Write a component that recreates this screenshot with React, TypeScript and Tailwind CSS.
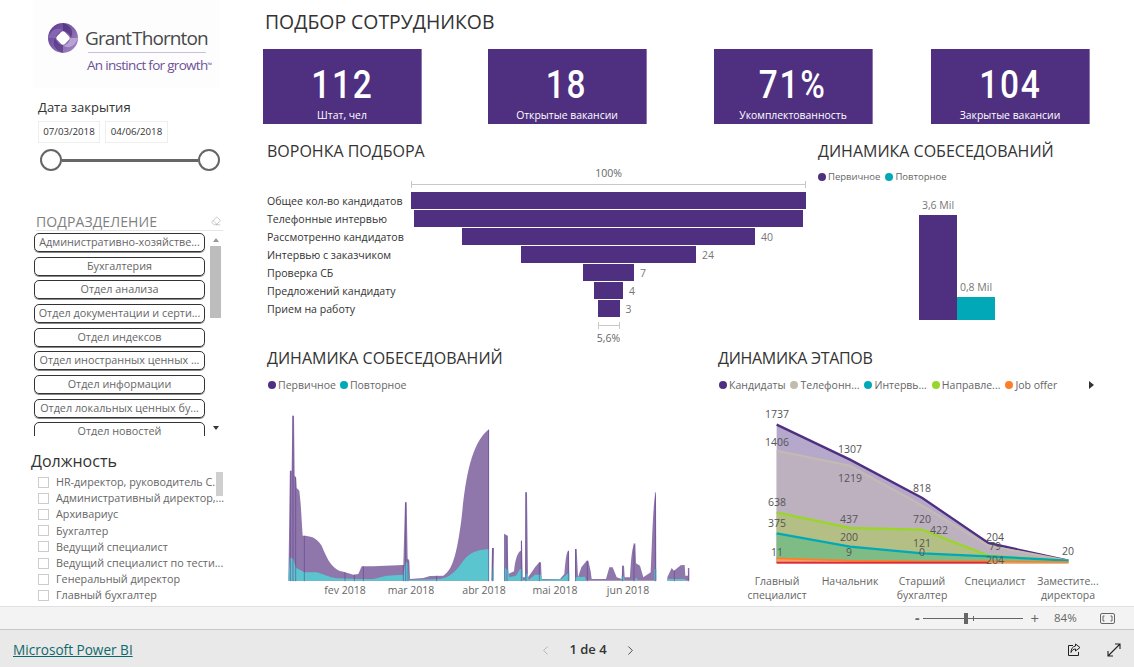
import { ChevronLeft, ChevronRight, Eraser } from "lucide-react";

const PURPLE = "#4f2f7f";
const TEAL = "#01a9b8";

const departments = [
  "Административно-хозяйстве...",
  "Бухгалтерия",
  "Отдел анализа",
  "Отдел документации и серти...",
  "Отдел индексов",
  "Отдел иностранных ценных ...",
  "Отдел информации",
  "Отдел локальных ценных бу...",
  "Отдел новостей",
];

const positions = [
  "HR-директор, руководитель С...",
  "Административный директор,...",
  "Архивариус",
  "Бухгалтер",
  "Ведущий специалист",
  "Ведущий специалист по тести...",
  "Генеральный директор",
  "Главный бухгалтер",
];

const funnel = [
  { label: "Общее кол-во кандидатов", w: 395, value: "" },
  { label: "Телефонные интервью", w: 389, value: "" },
  { label: "Рассмотренно кандидатов", w: 293, value: "40" },
  { label: "Интервью с заказчиком", w: 175, value: "24" },
  { label: "Проверка СБ", w: 51, value: "7" },
  { label: "Предложений кандидату", w: 29, value: "4" },
  { label: "Прием на работу", w: 22, value: "3" },
];

function Logo() {
  return (
    <div className="relative h-[88px] w-[187px] ml-[33px] bg-[#fdfdfd]">
      <svg className="absolute left-[14px] top-[22px]" width="32" height="32" viewBox="0 0 32 32">
        <defs>
          <linearGradient id="gt" x1="0" y1="0" x2="1" y2="1">
            <stop offset="0" stopColor="#5a3590" />
            <stop offset="1" stopColor="#a78cc8" />
          </linearGradient>
        </defs>
        <circle cx="16" cy="16" r="15" fill="url(#gt)" />
        <path d="M16 1 C24 4 27 9 24 16 C22 11 19 9 16 9 Z" fill="#3f2470" opacity="0.55" />
        <path d="M31 16 C28 24 23 27 16 24 C21 22 23 19 23 16 Z" fill="#c9b6df" opacity="0.7" />
        <path d="M16 31 C8 28 5 23 8 16 C10 21 13 23 16 23 Z" fill="#3f2470" opacity="0.5" />
        <path d="M1 16 C4 8 9 5 16 8 C11 10 9 13 9 16 Z" fill="#8a6db3" opacity="0.8" />
        <rect x="10.5" y="10.5" width="11" height="11" rx="3" fill="#fff" transform="rotate(45 16 16)" />
      </svg>
      <div className="absolute left-[52px] top-[26px] text-[19px] leading-[24px] tracking-[-0.9px] [word-spacing:-3px] text-[#48484a] whitespace-nowrap">
        Grant Thornton
      </div>
      <div className="absolute left-[55px] top-[52px] h-px w-[118px] bg-[#cbbfe0]" />
      <div className="absolute left-[54px] top-[56px] text-[13.5px] leading-[18px] tracking-[-0.7px] text-[#6d5199] whitespace-nowrap">
        An instinct for growth
        <sup className="text-[6px]">™</sup>
      </div>
    </div>
  );
}

function Sidebar() {
  return (
    <div className="w-[263px] shrink-0 flex flex-col">
      <Logo />
      <div className="ml-[38px] mt-[11px] text-[13px] leading-[17px] text-[#333]">Дата закрытия</div>
      <div className="ml-[38px] mt-[5px] flex gap-[5px]">
        <div className="w-[62px] h-[22px] border border-[#eeeeee] text-[9.7px] leading-[20px] text-center text-[#333]">07/03/2018</div>
        <div className="w-[63px] h-[22px] border border-[#eeeeee] text-[9.7px] leading-[20px] text-center text-[#333]">04/06/2018</div>
      </div>
      <div className="ml-[40px] mt-[6px] w-[180px] flex items-center">
        <div className="w-[22px] h-[22px] rounded-full border-2 border-[#666] bg-white shrink-0" />
        <div className="flex-1 h-[3px] bg-[#666]" />
        <div className="w-[22px] h-[22px] rounded-full border-2 border-[#666] bg-white shrink-0" />
      </div>

      <div className="ml-[36px] mt-[41px] w-[187px] flex items-center justify-between border-b border-[#e6e6e6] h-[19px]">
        <span className="text-[14px] leading-[17px] text-[#808080] tracking-[0.1px]">ПОДРАЗДЕЛЕНИЕ</span>
        <Eraser className="w-[10px] h-[10px] text-[#aaa] mr-[2px]" strokeWidth={1.5} />
      </div>
      <div className="ml-[34px] mt-[2px] w-[189px] h-[203px] flex gap-[5px] overflow-hidden">
        <div className="w-[171px] shrink-0">
          {departments.map((d) => (
            <div
              key={d}
              className="h-[19px] mb-[4.67px] rounded-[5px] border border-[#333] shadow-[0_1px_0_#888] text-[10.8px] leading-[16px] text-center text-[#666] whitespace-nowrap overflow-hidden"
            >
              {d}
            </div>
          ))}
        </div>
        <div className="w-[11px] flex flex-col items-center">
          <div className="h-[13px] flex items-center"><div className="border-x-[3px] border-x-transparent border-b-[4px] border-b-[#999]" /></div>
          <div className="w-[11px] h-[72px] bg-[#bdbdbd]" />
          <div className="flex-1" />
          <div className="h-[16px] flex items-center"><div className="border-x-[3px] border-x-transparent border-t-[4px] border-t-[#333]" /></div>
        </div>
      </div>

      <div className="ml-[31px] mt-[15px] text-[16px] leading-[20px] text-[#333]">Должность</div>
      <div className="ml-[38px] mt-[2px] w-[185px] flex">
        <div className="w-[178px] pt-[1px]">
          {positions.map((p) => (
            <div key={p} className="h-[16.2px] flex items-center gap-[7px]">
              <div className="w-[11px] h-[11px] border border-[#cccccc] shrink-0" />
              <span className="text-[10.8px] leading-[16px] text-[#666] whitespace-nowrap">{p}</span>
            </div>
          ))}
        </div>
        <div className="w-[7px] h-[24px] -mt-[1px] bg-[#cfcfcf]" />
      </div>
    </div>
  );
}

function Kpi({ value, label, className }: { value: string; label: string; className: string }) {
  return (
    <div className={`w-[159px] h-[75px] bg-[#4f2f7f] border-r border-[#8f77ab] flex flex-col items-center text-white ${className}`}>
      <div className="mt-[13px] text-[38px] leading-[46px] tracking-[2px] scale-x-[0.88] font-medium font-['Roboto',sans-serif]">{value}</div>
      <div className="mt-[0px] text-[10.4px] leading-[14px] whitespace-nowrap">{label}</div>
    </div>
  );
}

function LegendDot({ color, label, small }: { color: string; label: string; small?: boolean }) {
  return (
    <span className="flex items-center gap-[2px]">
      <span className="w-[8px] h-[8px] rounded-full" style={{ background: color }} />
      <span className={`${small ? "text-[9.5px]" : "text-[10.5px]"} leading-[14px] text-[#666] whitespace-nowrap`}>{label}</span>
    </span>
  );
}

function Funnel() {
  return (
    <div className="w-[555px] shrink-0 pl-[4px]">
      <div className="text-[16px] leading-[20px] text-[#333] mt-[17px]">ВОРОНКА ПОДБОРА</div>
      <div className="ml-[144px] w-[395px] mt-[5px] text-center text-[10.5px] leading-[14px] text-[#666]">100%</div>
      <div className="ml-[144px] w-[395px] h-[7px] mt-[1px] border-x border-[#c8c8c8] flex items-center">
        <div className="h-px w-full bg-[#c8c8c8]" />
      </div>
      <div className="mt-[3px]">
        {funnel.map((f) => (
          <div key={f.label} className="h-[18px] flex items-center">
            <div className="w-[144px] shrink-0 pt-[2px] text-[10.6px] leading-[14px] text-[#333] whitespace-nowrap">{f.label}</div>
            <div className="w-[395px] h-[17px] flex justify-center relative">
              <div className="h-[17px] relative" style={{ width: f.w, background: PURPLE }}>
                {f.value && (
                  <span className="absolute left-full ml-[6px] top-[2px] text-[10.5px] leading-[14px] text-[#777]">{f.value}</span>
                )}
              </div>
            </div>
          </div>
        ))}
      </div>
      <div className="ml-[144px] w-[395px] flex flex-col items-center">
        <div className="w-[22px] h-[7px] mt-[5px] border-x border-[#c8c8c8] flex items-center">
          <div className="h-px w-full bg-[#c8c8c8]" />
        </div>
        <div className="text-[10.5px] leading-[14px] text-[#666] mt-[2px]">5,6%</div>
      </div>
    </div>
  );
}

function ColumnChart() {
  return (
    <div className="flex-1">
      <div className="text-[16px] leading-[20px] text-[#333] mt-[17px] whitespace-nowrap">ДИНАМИКА СОБЕСЕДОВАНИЙ</div>
      <div className="flex gap-[5px] mt-[9px]">
        <LegendDot small color={PURPLE} label="Первичное" />
        <LegendDot small color={TEAL} label="Повторное" />
      </div>
      <div className="ml-[101px] h-[136px] flex items-end">
        <div className="flex flex-col items-center w-[38px]">
          <span className="text-[10.5px] leading-[14px] text-[#777] mb-[3px] whitespace-nowrap">3,6 Mil</span>
          <div className="w-[38px] h-[105px]" style={{ background: PURPLE }} />
        </div>
        <div className="flex flex-col items-center w-[38px]">
          <span className="text-[10.5px] leading-[14px] text-[#777] mb-[3px] whitespace-nowrap">0,8 Mil</span>
          <div className="w-[38px] h-[23px]" style={{ background: TEAL }} />
        </div>
      </div>
    </div>
  );
}

function AreaChart() {
  const purple = [
    "M85 710 L90 380 L95 380 L97 215 L102 215 L104 395 L108 400 L110 432 L118 440 L122 480 L128 575 C150 575 170 580 185 605 C200 640 215 678 250 683 L280 692 L295 690 L305 667 L340 667 L430 663 L435 475 L440 475 L443 645 L448 650 L450 705 L490 702 L510 696 L550 695 C575 680 590 640 605 520 C615 420 630 300 685 257 L687 257 L687 710 Z",
    "M694 710 L696 612 L702 612 L700 710 Z",
    "M733 710 L733 570 L743 575 L745 690 L762 682 C766 640 775 622 783 620 L783 590 L786 590 L788 700 L795 700 L796 445 L801 445 L804 700 L818 680 L825 670 L838 655 L843 655 L845 705 L900 705 L913 690 C917 640 920 620 927 620 L928 710 Z",
    "M945 710 L945 615 L950 615 L954 700 L964 670 L980 650 L985 650 L992 682 L995 705 L1038 705 L1048 670 L1058 670 L1070 700 L1085 705 L1087 665 L1092 665 L1094 700 L1110 700 C1114 630 1118 600 1126 598 L1128 658 L1140 665 L1150 700 L1172 685 C1176 620 1178 470 1188 445 L1189 710 Z",
    "M1222 710 L1222 700 L1235 672 L1242 680 L1262 664 L1274 663 L1276 695 L1284 695 L1285 672 L1288 672 L1288 710 Z",
  ];
  const teal = [
    "M85 710 L90 640 L100 645 L108 672 L125 680 L132 685 L170 685 C190 690 205 700 230 703 L300 705 L340 705 L380 695 L430 692 L437 655 L443 655 L447 708 L540 705 C570 700 590 680 610 650 C630 625 650 618 687 615 L687 710 Z",
    "M696 710 L697 675 L701 675 L701 710 Z",
    "M733 710 L733 668 L745 680 L748 700 L768 695 L780 675 L787 675 L788 708 L796 708 L798 688 L803 690 L806 708 L825 692 L843 692 L847 708 L905 705 L925 687 L928 687 L928 710 Z",
    "M945 710 L945 700 L975 698 L978 710 Z",
    "M1085 710 L1085 695 L1092 698 L1094 710 Z M1125 710 L1128 700 L1135 710 Z",
    "M1183 710 L1183 675 L1189 675 L1189 710 Z",
    "M1222 710 L1222 705 L1276 705 L1276 710 Z",
  ];
  const lines: [number, number][] = [
    [91, 380], [99, 215], [107, 400], [133, 575], [255, 685], [283, 692], [310, 667], [430, 663],
    [437, 475], [444, 645], [530, 695], [686, 257], [698, 612], [734, 570], [741, 575], [784, 590],
    [798, 445], [838, 655], [925, 620], [947, 615], [982, 650], [1088, 665], [1122, 598], [1186, 445],
    [1243, 680], [1285, 672],
  ];
  return (
    <div className="w-[450px] shrink-0 -ml-[3px]">
      <div className="ml-[7px] mt-[5px] text-[16px] leading-[20px] text-[#333] whitespace-nowrap">ДИНАМИКА СОБЕСЕДОВАНИЙ</div>
      <div className="ml-[8px] flex gap-[4px] mt-[10px]">
        <LegendDot color={PURPLE} label="Первичное" />
        <LegendDot color={TEAL} label="Повторное" />
      </div>
      <svg width="450" height="214" viewBox="0 0 450 214" className="block">
        <g transform="translate(0 -48) scale(0.33333)">
          {purple.map((d, i) => <path key={i} d={d} fill="#8f77ab" />)}
          {teal.map((d, i) => <path key={i} d={d} fill="#5bc5cf" />)}
          {lines.map(([x, top]) => <path key={x} d={`M${x} 712 L${x} ${top}`} stroke="#5a3a8a" strokeWidth="2" opacity="0.8" fill="none" />)}
        </g>
        <g fontSize="10.5" fill="#666" textAnchor="middle">
          <text x="85" y="202">fev 2018</text>
          <text x="151" y="202">mar 2018</text>
          <text x="224" y="202">abr 2018</text>
          <text x="295" y="202">mai 2018</text>
          <text x="368" y="202">jun 2018</text>
        </g>
      </svg>
    </div>
  );
}

function LineChart() {
  const xs = [200, 420, 637, 835, 1075];
  const series = {
    purple: [242, 347, 462, 597, 650],
    gray: [320, 365, 485, 605, 650],
    green: [505, 552, 557, 635, 650],
    teal: [568, 608, 628, 637, 650],
    orange: [643, 650, 652, 652, 654],
  };
  const pts = (a: number[]) => a.map((y, i) => `${xs[i]},${y}`).join(" ");
  const area = (a: number[]) => `${pts(a)} 1075,658 200,658`;
  const labels: [string, number, number][] = [
    ["1737", 67, 70], ["1406", 67, 98], ["638", 67, 158], ["375", 67, 179], ["11", 67, 208],
    ["1307", 140, 105], ["1219", 140, 134], ["437", 139, 175], ["200", 139, 193], ["9", 139, 208],
    ["818", 212, 144], ["720", 212, 175], ["422", 229, 186], ["121", 212, 199], ["0", 212, 208],
    ["204", 285, 193], ["79", 285, 202], ["204", 285, 216], ["20", 358, 207],
  ];
  const cats: [string[], number][] = [
    [["Главный", "специалист"], 67],
    [["Начальник"], 140],
    [["Старший", "бухгалтер"], 212],
    [["Специалист"], 285],
    [["Заместите...", "директора"], 358],
  ];
  return (
    <div className="flex-1">
      <div className="ml-[8px] mt-[5px] text-[16px] leading-[20px] tracking-[-0.3px] text-[#333] whitespace-nowrap">ДИНАМИКА ЭТАПОВ</div>
      <div className="ml-[9px] w-[375px] flex gap-[5px] mt-[10px] items-center">
        <LegendDot color={PURPLE} label="Кандидаты" />
        <LegendDot color="#c4bbb0" label="Телефонн..." />
        <LegendDot color={TEAL} label="Интервь..." />
        <LegendDot color="#9ad62a" label="Направле..." />
        <LegendDot color="#fd7f28" label="Job offer" />
        <span className="ml-auto border-y-[4px] border-y-transparent border-l-[5px] border-l-[#333]" />
      </div>
      <svg width="424" height="214" viewBox="0 0 424 214" className="block overflow-visible">
        <g transform="translate(0 -48) scale(0.33333)">
          <polygon points={area(series.purple)} fill="#b6a8cb" />
          <polygon points={area(series.gray)} fill="#bdb1c0" />
          <polygon points={area(series.green)} fill="#b3bf85" />
          <polygon points={area(series.teal)} fill="#7fbc85" />
          <polygon points={area(series.orange)} fill="#f7a06a" />
          <polyline points={pts(series.purple)} fill="none" stroke={PURPLE} strokeWidth="7" />
          <polyline points={pts(series.gray)} fill="none" stroke="#c4bbb0" strokeWidth="6" />
          <polyline points={pts(series.green)} fill="none" stroke="#9ad62a" strokeWidth="7" />
          <polyline points={pts(series.teal)} fill="none" stroke={TEAL} strokeWidth="7" />
          <polyline points={pts(series.orange)} fill="none" stroke="#fd7f28" strokeWidth="5" />
          <polyline points="200,656 637,656 835,656" fill="none" stroke="#e8233f" strokeWidth="5" />
        </g>
        <g fontSize="10.5" fill="#555" textAnchor="middle">
          {labels.map(([t, x, y], i) => <text key={i} x={x} y={y - 48 + 4}>{t}</text>)}
        </g>
        <g fontSize="10.5" fill="#666" textAnchor="middle">
          {cats.map(([l, x]) => l.map((t, i) => <text key={t} x={x} y={193 + i * 13.5}>{t}</text>))}
        </g>
      </svg>
    </div>
  );
}

function StatusBar() {
  return (
    <div className="h-[24px] shrink-0 bg-[#f3f3f3] border-t border-[#e0e0e0] border-b border-b-[#c8c8c8] flex items-center justify-end text-[#666]">
      <span className="text-[14px] leading-[14px] font-bold mr-[3px]">-</span>
      <div className="relative w-[100px] h-px bg-[#666] mx-[1px]">
        <div className="absolute left-[41px] -top-[5px] w-[4px] h-[11px] bg-[#666]" />
        <div className="absolute left-[50px] -top-[2px] w-px h-[5px] bg-[#666]" />
      </div>
      <span className="text-[15px] leading-[14px] ml-[6px]">+</span>
      <span className="text-[11.5px] leading-[14px] ml-[15px] w-[24px]">84%</span>
      <svg className="ml-[22px] mr-[19px]" width="15" height="11" viewBox="0 0 15 11" fill="none" stroke="#666">
        <rect x="0.5" y="0.5" width="14" height="10" rx="1.5" />
        <path d="M4.5 3 H3 V8 H4.5 M10.5 3 H12 V8 H10.5" />
      </svg>
    </div>
  );
}

function Footer() {
  return (
    <div className="h-[37px] shrink-0 bg-[#e9e9e9] relative flex items-center pt-[3px]">
      <a className="ml-[13px] text-[13.6px] leading-[18px] text-[#0e6a6a] underline font-medium whitespace-nowrap">Microsoft Power BI</a>
      <div className="absolute left-[538px] top-[3px] bottom-0 w-[100px] flex items-center justify-between">
        <ChevronLeft className="w-[15px] h-[15px] text-[#b0b0b0]" strokeWidth={1.5} />
        <span className="text-[13px] font-semibold text-[#333]">1 de 4</span>
        <ChevronRight className="w-[15px] h-[15px] text-[#444]" strokeWidth={1.5} />
      </div>
      <div className="ml-auto flex items-center gap-[26px] mr-[13px]">
        <svg width="14" height="14" viewBox="0 0 14 14" fill="none" stroke="#222" strokeWidth="1">
          <path d="M6 2.5 H1.5 V12.5 H11.5 V9" />
          <path d="M8.5 1 L13 4.5 L8.5 8 V6 C6.5 6 5 7 4 9.5 C4 6 5.5 3.5 8.5 3 Z" />
        </svg>
        <svg width="14" height="14" viewBox="0 0 14 14" fill="none" stroke="#222" strokeWidth="1.1">
          <path d="M1 13 L13 1 M8 1 H13 V6 M1 8 V13 H6" />
        </svg>
      </div>
    </div>
  );
}

export default function App() {
  return (
    <div className="w-[1134px] h-[667px] flex flex-col overflow-hidden bg-white font-['Open_Sans',sans-serif]">
      <div className="h-[606px] flex shrink-0 overflow-hidden">
        <Sidebar />
        <div className="flex-1 flex flex-col">
          <div className="h-[51px] pl-[2px] pt-[9px] text-[19.4px] leading-[25px] text-[#333] whitespace-nowrap">ПОДБОР СОТРУДНИКОВ</div>
          <div className="flex">
            <Kpi value="112" label="Штат, чел" className="" />
            <Kpi value="18" label="Открытые вакансии" className="ml-[66px]" />
            <Kpi value="71%" label="Укомплектованность" className="ml-[67px]" />
            <Kpi value="104" label="Закрытые вакансии" className="ml-[58px]" />
          </div>
          <div className="h-[219px] flex">
            <Funnel />
            <ColumnChart />
          </div>
          <div className="flex-1 flex">
            <AreaChart />
            <LineChart />
          </div>
        </div>
      </div>
      <StatusBar />
      <Footer />
    </div>
  );
}
